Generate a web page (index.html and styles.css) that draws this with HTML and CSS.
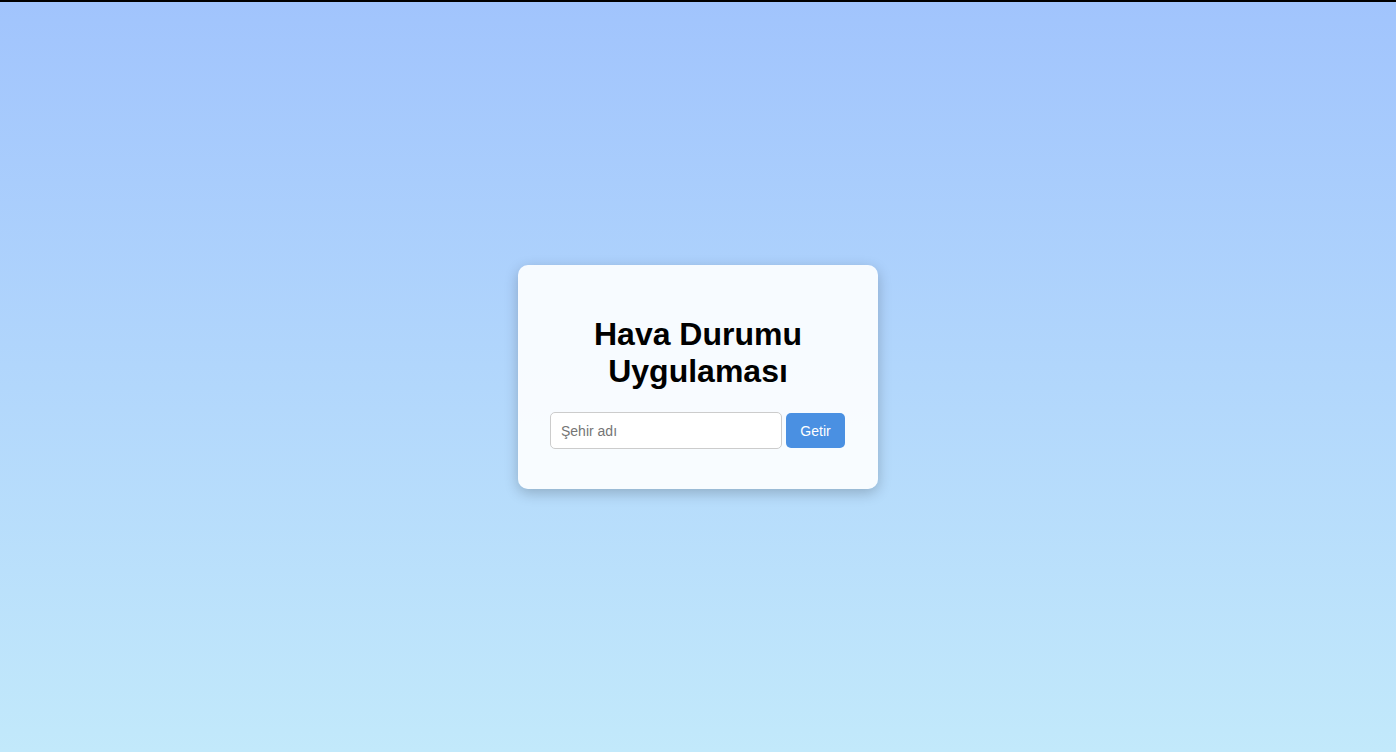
FILE: index.html
```html
<!DOCTYPE html>
<html lang="tr">
<head>
<meta charset="UTF-8">
<title>Hava Durumu Uygulaması</title>
<link rel="stylesheet" href="styles.css">
</head>
<body>
<div class="topline"></div>
<main class="page">
  <section class="card">
    <h1 class="title">Hava Durumu Uygulaması</h1>
    <form class="search" onsubmit="return false;">
      <input class="city" type="text" placeholder="Şehir adı">
      <button class="btn" type="submit">Getir</button>
    </form>
    <div class="result"></div>
  </section>
</main>
</body>
</html>
```
FILE: styles.css
```css
* { box-sizing: border-box; }
html, body { margin: 0; padding: 0; height: 100%; }
body {
  font-family: "Liberation Sans", Arial, sans-serif;
  background: linear-gradient(to bottom, #a1c4fd, #c2e9fb);
  display: flex;
  flex-direction: column;
}
.topline { height: 2px; background: #000; flex: none; }
.page {
  flex: 1;
  display: flex;
  align-items: center;
  justify-content: center;
}
.card {
  width: 360px;
  padding: 29px 32px 30px;
  background: rgba(255, 255, 255, 0.9);
  border-radius: 10px;
  box-shadow: 0 4px 14px rgba(0, 0, 0, 0.22);
  text-align: center;
}
.title {
  font-size: 32px;
  font-weight: bold;
  line-height: normal;
  margin: 22px 0 22px;
  color: #000;
}
.search {
  display: flex;
  align-items: center;
  gap: 4px;
  margin: 0;
}
.city {
  width: 232px;
  height: 37px;
  padding: 8px 10px;
  border: 1px solid #ccc;
  border-radius: 5px;
  font-family: "Liberation Sans", Arial, sans-serif;
  font-size: 14px;
  background: #fff;
}
.city::placeholder { color: #757575; }
.btn {
  width: 59px;
  height: 35px;
  padding: 0;
  border: none;
  border-radius: 5px;
  background: #4a90e2;
  color: #fff;
  font-family: "Liberation Sans", Arial, sans-serif;
  font-size: 14px;
}
.result { height: 10px; }
```
